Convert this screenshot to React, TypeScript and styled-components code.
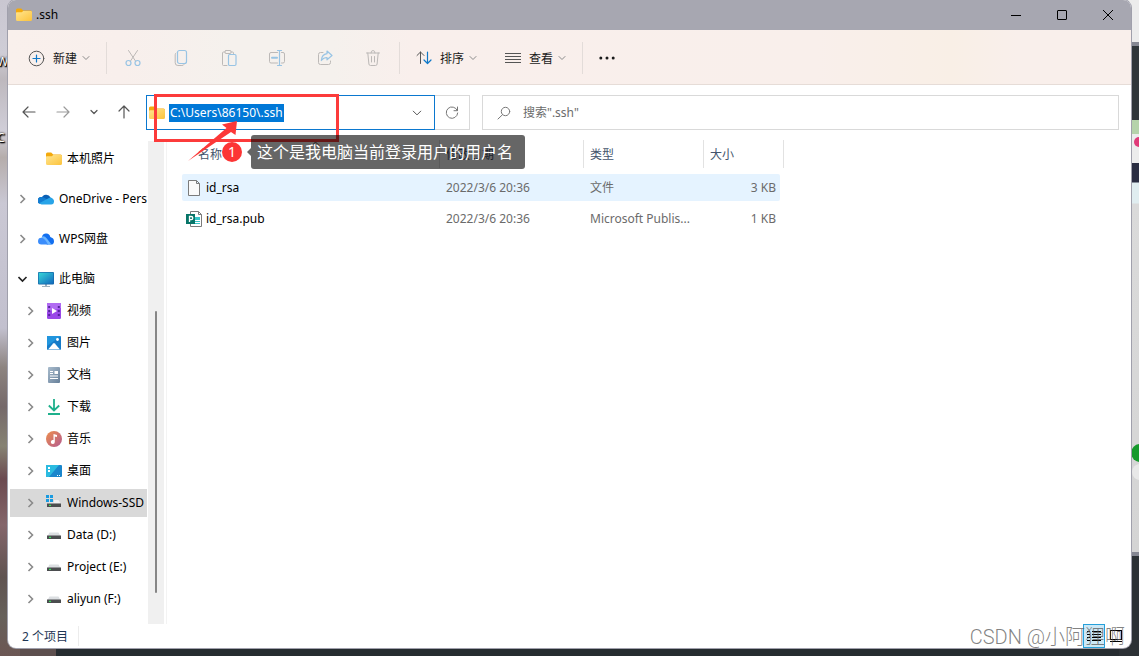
import React from 'react';
import styled, { createGlobalStyle, css } from 'styled-components';

const Global = createGlobalStyle`
  * { box-sizing: border-box; }
  html, body { margin: 0; padding: 0; }
  body {
    font-family: "Noto Sans", "Noto Sans CJK SC", sans-serif;
    font-size: 12px;
    line-height: 18px;
    color: #000;
  }
  button, input {
    font: inherit;
    color: inherit;
    border: 0;
    padding: 0;
    margin: 0;
    background: none;
    outline: 0;
  }
  svg { display: block; flex: none; }
`;

const Desktop = styled.div`
  position: relative;
  display: flex;
  min-height: 100vh;
  padding: 0 8px 8px;
  background: linear-gradient(90deg, #5d4f4e 56px, #262c30 56px);
  overflow: hidden;
`;

const LeftWallpaper = styled.div`
  position: absolute;
  left: 0;
  top: 0;
  bottom: 0;
  width: 20px;
  color: #fff;
  background: linear-gradient(
    180deg,
    #c9c7d1 0%, #cfcdd6 8%, #bdb8bd 12%, #d0ced8 20%, #b5adab 24%, #cac8d4 31%,
    #c2c0ce 50%, #8d8480 56%, #75696a 62%, #868273 68%, #6b4a50 73%, #84656a 80%,
    #5f5350 88%, #66605a 94%, #6c5754 100%
  );
`;

const DesktopLabel = styled.span<{ $top: number }>`
  position: absolute;
  left: -3px;
  top: ${(p) => p.$top}px;
  text-shadow: 0 0 2px #000, 1px 1px 1px #000, 1px 1px 2px #000;
`;

const RightWallpaper = styled.div`
  position: absolute;
  right: 0;
  top: 0;
  width: 20px;
  height: 100%;
  background: linear-gradient(
    180deg,
    #ececec 0, #ececec 42px, #858792 42px, #858792 46px, #30363a 46px, #30363a 120px,
    #b5d3ab 120px, #b5d3ab 134px, #ececec 134px, #ececec 163px, #2a2d42 163px,
    #2a2d42 182px, #e0edf0 183px, #e0edf0 203px, #dadada 204px, #d4d4d4 552px,
    #858792 552px, #858792 556px, #2c3135 556px
  );
`;

const Dot = styled.i<{ $top: number; $size: number; $color: string; $left: number }>`
  position: absolute;
  left: ${(p) => p.$left}px;
  top: ${(p) => p.$top}px;
  width: ${(p) => p.$size}px;
  height: ${(p) => p.$size}px;
  border-radius: 50%;
  background: ${(p) => p.$color};
`;

const Window = styled.main`
  position: relative;
  display: flex;
  flex: 1;
  flex-direction: column;
  min-width: 0;
  border-radius: 8px;
  background: #fff;
  box-shadow: 0 0 0 1px #a0a0ac;
`;

const TitleBar = styled.header`
  display: flex;
  align-items: center;
  height: 30px;
  padding-left: 8px;
  border-radius: 8px 8px 0 0;
  background: #a7a7b1;
`;

const Title = styled.h1`
  flex: 1;
  margin: 0 0 0 4px;
  font-size: 12px;
  font-weight: 400;
`;

const CaptionButton = styled.button`
  display: grid;
  place-items: center;
  width: 46px;
  height: 30px;
`;

const CommandBar = styled.div`
  display: flex;
  align-items: center;
  height: 55px;
  padding: 2px 0 0 20px;
  border-bottom: 1px solid #e6dcd7;
  background: linear-gradient(90deg, #f9f0ec 0, #f8efec 10%, #f5f1ed 20%, #f5f1ed 29%, #f9efec 36%, #f9efeb 72%, #f9efe6 84%, #f9efeb 90%);
`;

const Command = styled.button`
  display: flex;
  align-items: center;
  height: 32px;
  color: #1a1a1a;
`;

const CommandLabel = styled.span`
  margin: 0 5px 0 8px;
  padding-top: 1px;
`;

const CommandDivider = styled.span<{ $before: number; $after: number }>`
  width: 1px;
  height: 32px;
  margin: 0 ${(p) => p.$after}px 0 ${(p) => p.$before}px;
  background: #e3dcd9;
`;

const IconCommand = styled.button`
  display: grid;
  place-items: center;
  width: 48px;
  height: 32px;
`;

const ViewCommand = styled(Command)`
  margin-left: 28px;
`;

const NavBar = styled.div`
  display: flex;
  align-items: center;
  padding: 10px 12px 10px 14px;
`;

const History = styled.div`
  display: flex;
  align-items: center;
  gap: 20px;
  margin-right: 14px;
  padding-bottom: 2px;
`;

const NavButton = styled.button`
  display: grid;
  place-items: center;
`;

const AddressBox = styled.label`
  display: flex;
  align-items: center;
  flex: 0 1 289px;
  height: 35px;
  padding: 0 12px 0 2px;
  border: 1px solid #0b78cf;
  gap: 4px;
`;

const AddressInput = styled.input`
  field-sizing: content;
  height: 18px;
  margin-right: auto;
  padding: 0 1px;
  color: #fff;
  background: #0078d7;
`;

const Refresh = styled.button`
  display: grid;
  place-items: center;
  width: 35px;
  height: 35px;
  margin-right: 12px;
  border: 1px solid #d9d9d9;
  border-left: 0;
`;

const SearchBox = styled.label`
  display: flex;
  align-items: center;
  flex: 1;
  height: 35px;
  padding: 0 14px;
  gap: 12px;
  border: 1px solid #d9d9d9;
`;

const SearchInput = styled.input`
  flex: 1;
  min-width: 0;
  &::placeholder { color: #6b6b6b; opacity: 1; }
`;

const Body = styled.div`
  display: flex;
  flex: 1;
`;

const Sidebar = styled.nav`
  width: 140px;
  padding: 5px 1px 0 2px;
  overflow: hidden;
`;

const ScrollTrack = styled.div`
  width: 16px;
  margin-top: 1px;
  padding: 170px 7px 0;
  background: #f0f0f0;
`;

const ScrollThumb = styled.div`
  width: 2px;
  height: 282px;
  border-radius: 1px;
  background: #868686;
`;

const TreeList = styled.ul`
  display: flex;
  flex-direction: column;
  gap: 12px;
  margin: 0;
  padding: 0;
  list-style: none;
`;

const DriveList = styled(TreeList)`
  gap: 4px;
  padding-top: 4px;
`;

const TreeLink = styled.a<{ $depth: number; $selected?: boolean }>`
  display: flex;
  align-items: center;
  height: 28px;
  padding-left: ${(p) => 8 + p.$depth * 8}px;
  color: #000;
  text-decoration: none;
  white-space: nowrap;
  overflow: hidden;
  ${(p) => p.$selected && css`background: #d9d9d9;`}
`;

const Twisty = styled.span`
  flex: none;
  width: 10px;
  margin-right: 10px;
`;

const TreeLabel = styled.span`
  margin-left: 5px;
`;

const Content = styled.section`
  flex: 1;
  min-width: 0;
  margin-left: 2px;
  padding-left: 15px;
  border-left: 1px solid #f3f3f3;
`;

const FileTable = styled.table`
  width: 602px;
  table-layout: fixed;
  border-collapse: separate;
  border-spacing: 0 4px;
  margin-top: -4px;
`;

const HeadCell = styled.th`
  height: 30px;
  padding: 0 0 2px;
  text-align: left;
  font-weight: 400;
  color: #44546c;
`;

const HeadLabel = styled.span<{ $indent: number }>`
  display: block;
  height: 28px;
  padding-left: ${(p) => p.$indent}px;
  line-height: 30px;
  border-right: 1px solid #e2e2e2;
`;

const FileRow = styled.tr<{ $hover?: boolean }>`
  ${(p) => p.$hover && css`
    td:not(:last-child) { background: #e5f3ff; }
    td:first-child { border-radius: 2px 0 0 2px; }
    td:nth-last-child(2) { border-radius: 0 2px 2px 0; }
  `}
`;

const Cell = styled.td<{ $right?: boolean }>`
  height: 27px;
  padding: 0 4px 0 6px;
  color: #6b6b6b;
  text-align: ${(p) => (p.$right ? 'right' : 'left')};
  white-space: nowrap;
  overflow: hidden;
  text-overflow: ellipsis;
`;

const NameCell = styled(Cell)`
  padding-left: 4px;
  color: #000;
`;

const FileName = styled.span`
  display: flex;
  align-items: center;
  gap: 4px;
`;

const StatusBar = styled.footer`
  display: flex;
  align-items: center;
  height: 24px;
  padding: 0 4px 0 14px;
  color: #1e3654;
`;

const ItemCount = styled.span`
  margin-right: auto;
  padding: 2px 10px 0 0;
  border-right: 1px solid #ececec;
`;

const ViewToggle = styled.button<{ $active?: boolean }>`
  display: grid;
  place-items: center;
  width: 22px;
  height: 24px;
  ${(p) => p.$active && css`
    border: 1px solid #26a0da;
    background: #cce8f6;
  `}
`;

const HighlightBox = styled.div`
  position: absolute;
  left: 146px;
  top: 94px;
  width: 185px;
  height: 48px;
  border: 3px solid #fc3b3b;
`;

const Arrow = styled.svg`
  position: absolute;
  left: 180px;
  top: 120px;
`;

const Step = styled.span`
  position: absolute;
  left: 214px;
  top: 142px;
  width: 20px;
  height: 20px;
  border-radius: 50%;
  background: #fc3535;
  color: #fff;
  font-size: 14px;
  line-height: 20px;
  text-align: center;
`;

const Callout = styled.div`
  position: absolute;
  left: 243px;
  top: 135px;
  height: 34px;
  padding: 0 12px 0 6px;
  border-radius: 3px;
  background: rgba(0, 0, 0, 0.6);
  color: #fff;
  font-size: 16px;
  line-height: 34px;
  white-space: nowrap;
  &::before {
    content: "";
    position: absolute;
    right: 100%;
    top: 13px;
    border: 4px solid transparent;
    border-left: 0;
    border-right-color: rgba(0, 0, 0, 0.6);
  }
`;

const Watermark = styled.span`
  position: absolute;
  right: 6px;
  bottom: -2px;
  color: rgba(90, 90, 90, 0.75);
  font-family: Roboto, "Noto Sans CJK SC", sans-serif;
  font-size: 20px;
  font-weight: 300;
  line-height: 26px;
  pointer-events: none;
`;

const SortMark = styled.svg`
  position: absolute;
  left: 303px;
  top: 141px;
`;

const stroke = { fill: 'none', strokeLinecap: 'round', strokeLinejoin: 'round' } as const;

const FolderIcon = () => (
  <svg width="16" height="16" viewBox="0 0 16 16">
    <defs>
      <linearGradient id="folder" x1="0" y1="0" x2="1" y2="1">
        <stop offset="0" stopColor="#ffe590" />
        <stop offset="1" stopColor="#fcc33c" />
      </linearGradient>
    </defs>
    <path d="M0 3q0-1.500 1.500-1.500h3.700l2 2h7.300q1.500 0 1.500 1.500v5H0z" fill="#f3a90c" />
    <path d="M0 6q0-.8.800-.8h5l1.400-1.200h7.600Q16 4 16 5v7.500q0 1.500-1.500 1.500h-13Q0 14 0 12.500z" fill="url(#folder)" />
  </svg>
);

const Chevron = ({ size = 8, color = '#8a8a8a', width = 1 }) => (
  <svg width={size} height={size} viewBox="0 0 8 8" {...stroke} stroke={color} strokeWidth={width}>
    <path d="M1 2.500l3 3 3-3" />
  </svg>
);

const TreeArrow = ({ open }: { open?: boolean }) => (
  <svg width="10" height="10" viewBox="0 0 10 10" fill="none" stroke={open ? '#222' : '#8a8a8a'} strokeWidth="1.600">
    <path d={open ? 'M.5 3l4 4 4-4' : 'M2.500 1l4 4-4 4'} />
  </svg>
);

const PlusIcon = () => (
  <svg width="17" height="17" viewBox="0 0 17 17" {...stroke}>
    <circle cx="8.500" cy="8.500" r="7.300" stroke="#555" />
    <path d="M5 8.500h7M8.500 5v7" stroke="#0f78c8" strokeWidth="1.200" />
  </svg>
);

const GREY = '#bcb9b7';
const BLUE = '#98c4e4';

const CutIcon = () => (
  <svg width="16" height="18" viewBox="0 0 16 18" {...stroke}>
    <path d="M3.500 1.500l7.200 10.800M12.500 1.500L5.300 12.300" stroke={GREY} />
    <circle cx="3.500" cy="14" r="2.500" stroke={BLUE} strokeWidth="1.200" />
    <circle cx="12.500" cy="14" r="2.500" stroke={BLUE} strokeWidth="1.200" />
  </svg>
);
const CopyIcon = () => (
  <svg width="16" height="18" viewBox="0 0 16 18" {...stroke}>
    <path d="M3 4q-.8.500-.8 1.800v8q0 2.700 2.700 2.700h4q1.600 0 2.200-1" stroke={GREY} />
    <rect x="4.500" y="1.500" width="9" height="13" rx="2" stroke={BLUE} strokeWidth="1.200" />
  </svg>
);
const PasteIcon = () => (
  <svg width="16" height="18" viewBox="0 0 16 18" {...stroke}>
    <path d="M4 3H2.500q-1 0-1 1v11.500q0 1 1 1H6M10 3h1.500q1 0 1 1v.5" stroke={GREY} />
    <rect x="4" y="1.500" width="6" height="3" rx="1" stroke={GREY} />
    <rect x="7.500" y="5.500" width="7.500" height="11" rx="1.200" stroke={BLUE} strokeWidth="1.200" />
  </svg>
);
const RenameIcon = () => (
  <svg width="18" height="18" viewBox="0 0 18 18" {...stroke}>
    <path d="M9.500 3.500H3q-1.500 0-1.500 1.500v7.500Q1.500 14 3 14h6.500M13.500 3.500H15q1.500 0 1.500 1.500v7.500Q16.500 14 15 14h-1.500" stroke={GREY} />
    <path d="M9.500 1.500h4M11.500 1.500v15M9.500 16.500h4" stroke={BLUE} strokeWidth="1.200" />
    <path d="M4 8.700h5" stroke={BLUE} strokeWidth="2" />
  </svg>
);
const ShareIcon = () => (
  <svg width="16" height="18" viewBox="0 0 16 18" {...stroke}>
    <path d="M6 3.500H3.500Q1.500 3.500 1.500 5.500v8q0 2 2 2h8q2 0 2-2V12" stroke={GREY} />
    <path d="M10 2l5 4.500-5 4.300V8.500Q6.500 8.500 4.300 11.500 4.700 5.500 10 4.700z" stroke={BLUE} strokeWidth="1.200" />
  </svg>
);
const DeleteIcon = () => (
  <svg width="16" height="18" viewBox="0 0 16 18" {...stroke} stroke={GREY}>
    <path d="M1.500 4h13M6 4q0-2.500 2-2.500T10 4M2.800 4l1.100 11q.1 1.500 1.600 1.500h5q1.500 0 1.600-1.500L13.200 4M6.500 7.500v5.500M9.500 7.500v5.500" />
  </svg>
);
const SortIcon = () => (
  <svg width="16" height="14" viewBox="0 0 16 14" {...stroke}>
    <path d="M4.500 12.500V1M1 4.500L4.500 1 8 4.500" stroke="#555" />
    <path d="M11.500 1v11.500M8 9l3.500 3.500L15 9" stroke="#0f78c8" strokeWidth="1.200" />
  </svg>
);
const LinesIcon = () => (
  <svg width="16" height="12" viewBox="0 0 16 12" stroke="#555" shapeRendering="crispEdges">
    <path d="M0 1.500h16M0 4.500h16M0 7.500h16M0 10.500h16" />
  </svg>
);
const MoreIcon = () => (
  <svg width="16" height="4" viewBox="0 0 16 4" fill="#1a1a1a">
    <circle cx="1.800" cy="2" r="1.500" />
    <circle cx="8" cy="2" r="1.500" />
    <circle cx="14.200" cy="2" r="1.500" />
  </svg>
);

const ArrowIcon = ({ d, color = '#555' }: { d: string; color?: string }) => (
  <svg width="14" height="14" viewBox="0 0 14 14" {...stroke} stroke={color} strokeWidth="1.200">
    <path d={d} />
  </svg>
);

const CloudIcon = () => (
  <svg width="16" height="16" viewBox="0 0 16 16">
    <path d="M3.500 7A5 5 0 0 1 12.600 6.400L9 11 1 12.500A3.600 3.600 0 0 1 3.500 6z" fill="#0b60b5" />
    <path d="M3.700 6a3.700 3.700 0 0 1 2.200.6L10 9l-8.500 3.700A3.600 3.600 0 0 1 3.700 6z" fill="#137dd2" />
    <path d="M1.200 12.300L10.500 7.200A3.600 3.600 0 0 1 16 10.500 2.900 2.900 0 0 1 13 13.400H3.600A3.500 3.500 0 0 1 1.200 12.300z" fill="#28a4e8" />
  </svg>
);
const WpsIcon = () => (
  <svg width="16" height="16" viewBox="0 0 16 16">
    <path d="M4 5.500A4.300 4.300 0 0 1 12.300 6Q16 7 16 10.400 16 13.500 13 13.500H9L4 8z" fill="#126ff0" />
    <path d="M4 5.500q2.500-1 5 2.200l4.500 5.800H9L3.500 7z" fill="#6cb6ff" />
    <path d="M0 10.200A3.500 3.500 0 0 1 3.500 6.800Q6 7 8 10l2 3.500H3.500A3.400 3.400 0 0 1 0 10.200z" fill="#3b8dfb" />
  </svg>
);
const PcIcon = () => (
  <svg width="16" height="16" viewBox="0 0 16 16">
    <defs>
      <linearGradient id="screen" x1="0" y1="0" x2="1" y2="1">
        <stop offset="0" stopColor="#36d6d8" />
        <stop offset="1" stopColor="#1268bd" />
      </linearGradient>
    </defs>
    <path d="M7 13h2v2H7zM4 15h8v1H4z" fill="#9fb1bf" />
    <rect y="1" width="16" height="12.500" rx="1" fill="#1567a8" />
    <rect x=".7" y="1.700" width="14.600" height="11" fill="url(#screen)" />
  </svg>
);
const VideoIcon = () => (
  <svg width="16" height="16" viewBox="0 0 16 16">
    <rect x="1" width="14" height="16" rx="1.200" fill="#9a48e8" />
    <path d="M1 0h14v5L1 9z" fill="#b16bf2" />
    <path d="M2.200 3h2v2h-2zM2.200 7h2v2h-2zM2.200 11h2v2h-2zM11.800 3h2v2h-2zM11.800 7h2v2h-2zM11.800 11h2v2h-2z" fill="#54239c" />
    <path d="M6 5l5 3-5 3z" fill="#fff" />
  </svg>
);
const ImageIcon = () => (
  <svg width="16" height="16" viewBox="0 0 16 16">
    <rect x="1" y="1" width="14" height="14" rx="1.200" fill="#167cc9" />
    <path d="M1 1h14L1 11z" fill="#2195dd" />
    <path d="M2 14.500L7.200 8.500q.8-.8 1.600 0l5.200 6z" fill="#fff" />
    <circle cx="11.500" cy="4.500" r="1.400" fill="#fff" />
  </svg>
);
const DocIcon = () => (
  <svg width="16" height="16" viewBox="0 0 16 16">
    <defs>
      <linearGradient id="doc" x1="0" y1="0" x2="1" y2="1">
        <stop offset="0" stopColor="#a9bccd" />
        <stop offset="1" stopColor="#667f99" />
      </linearGradient>
    </defs>
    <rect x="2" width="12" height="16" rx="1" fill="url(#doc)" />
    <path d="M4 4h3v1H4zM4 6h3v1H4zM8.500 4H12v3H8.500zM4 8.500h8v1H4zM4 11h8v1H4z" fill="#fff" />
  </svg>
);
const DownloadIcon = () => (
  <svg width="16" height="16" viewBox="0 0 16 16" fill="none" stroke="#1eb08c" strokeWidth="1.800">
    <path d="M8 0v11M2.800 6.500L8 11.500l5.200-5M2 15h12" />
  </svg>
);
const MusicIcon = () => (
  <svg width="16" height="16" viewBox="0 0 16 16">
    <defs>
      <linearGradient id="music" x1="0" y1="0" x2="1" y2="1">
        <stop offset="0" stopColor="#ee8f4c" />
        <stop offset="1" stopColor="#b35a91" />
      </linearGradient>
    </defs>
    <circle cx="8" cy="8" r="8" fill="url(#music)" />
    <path d="M7.500 3l3.500 1v2L8.800 5.500V11a2 2 0 1 1-1.300-1.900z" fill="#fff" />
  </svg>
);
const DesktopIcon = () => (
  <svg width="16" height="16" viewBox="0 0 16 16">
    <rect y="2" width="16" height="12" rx="1" fill="#1a86cc" />
    <path d="M0 3q0-1 1-1h12L3 14H1q-1 0-1-1z" fill="#2bbbe0" />
    <path d="M2 4h2v2H2zM2 7h2v2H2zM11 12h1v1h-1zM13 12h1v1h-1z" fill="#fff" />
  </svg>
);
const DriveIcon = ({ system }: { system?: boolean }) => (
  <svg width="16" height="16" viewBox="0 0 16 16">
    {system && <path d="M0 0h3v3H0zM4 0h3v3H4zM0 4h3v3H0zM4 4h3v3H4z" fill="#1a9be0" />}
    <path d={system ? 'M8 5h4.500l2 3.500h-12.500l1-1h5z' : 'M3.500 5.500h9l2 3.500h-13z'} fill={system ? '#f0f1f3' : '#dcdfe2'} />
    <rect x="1" y="8.500" width="14" height="3.500" fill="#4b4d4f" />
    <rect x="3" y="9.800" width="2" height="1.200" fill="#37e05a" />
  </svg>
);
const PageIcon = () => (
  <svg width="16" height="16" viewBox="0 0 16 16" fill="#fafafa" stroke="#7b7b7b">
    <path d="M2.500.5h8l3 3v12h-11zM10.500.5v3h3" />
  </svg>
);
const PublisherIcon = () => (
  <svg width="16" height="16" viewBox="0 0 16 16">
    <path d="M4.500.5h8l3 3v12h-11zM12.500.5v3h3" fill="#fff" stroke="#7b7b7b" />
    <path d="M9 6h5v3H9z" fill="#38c6c9" />
    <path d="M9 10h5v1H9zM9 12h5v1H9z" fill="#38c6c9" />
    <rect y="3" width="9" height="10" fill="#077568" />
    <path d="M3.500 11V5.500h1.700a1.500 1.500 0 0 1 0 3.200H3.500" fill="none" stroke="#fff" strokeWidth="1.300" />
  </svg>
);

const places = [
  { name: '视频', icon: <VideoIcon /> },
  { name: '图片', icon: <ImageIcon /> },
  { name: '文档', icon: <DocIcon /> },
  { name: '下载', icon: <DownloadIcon /> },
  { name: '音乐', icon: <MusicIcon /> },
  { name: '桌面', icon: <DesktopIcon /> },
  { name: 'Windows-SSD', icon: <DriveIcon system />, selected: true },
  { name: 'Data (D:)', icon: <DriveIcon /> },
  { name: 'Project (E:)', icon: <DriveIcon /> },
  { name: 'aliyun (F:)', icon: <DriveIcon /> },
];

const files = [
  { name: 'id_rsa', date: '2022/3/6 20:36', type: '文件', size: '3 KB', icon: <PageIcon />, hover: true },
  { name: 'id_rsa.pub', date: '2022/3/6 20:36', type: 'Microsoft Publis...', size: '1 KB', icon: <PublisherIcon /> },
];

type NodeProps = {
  name: string;
  icon: React.ReactNode;
  depth: number;
  leaf?: boolean;
  open?: boolean;
  selected?: boolean;
};

const TreeNode = ({ name, icon, depth, leaf, open, selected }: NodeProps) => (
  <TreeLink href="#" $depth={depth} $selected={selected}>
    <Twisty>{!leaf && <TreeArrow open={open} />}</Twisty>
    {icon}
    <TreeLabel>{name}</TreeLabel>
  </TreeLink>
);

export default function App() {
  return (
    <>
      <Global />
      <Desktop>
        <LeftWallpaper>
          <DesktopLabel $top={53}>W</DesktopLabel>
          <DesktopLabel $top={129}>C</DesktopLabel>
        </LeftWallpaper>
        <RightWallpaper>
          <Dot $left={15} $top={137} $size={10} $color="#e03a78" />
          <Dot $left={12} $top={444} $size={18} $color="#169a2c" />
          <Dot $left={13} $top={464} $size={16} $color="#e8e8e8" />
        </RightWallpaper>
        <Window>
          <TitleBar>
            <FolderIcon />
            <Title>.ssh</Title>
            <CaptionButton aria-label="最小化">
              <svg width="10" height="10" viewBox="0 0 10 10" stroke="#000"><path d="M0 5.500h10" /></svg>
            </CaptionButton>
            <CaptionButton aria-label="最大化">
              <svg width="10" height="10" viewBox="0 0 10 10" stroke="#000" fill="none"><rect x=".5" y=".5" width="9" height="9" rx=".5" /></svg>
            </CaptionButton>
            <CaptionButton aria-label="关闭">
              <svg width="10" height="10" viewBox="0 0 10 10" stroke="#000"><path d="M0 0l10 10M10 0L0 10" /></svg>
            </CaptionButton>
          </TitleBar>

          <CommandBar>
            <Command>
              <PlusIcon />
              <CommandLabel>新建</CommandLabel>
              <Chevron />
            </Command>
            <CommandDivider $before={16} $after={2} />
            <IconCommand aria-label="剪切"><CutIcon /></IconCommand>
            <IconCommand aria-label="复制"><CopyIcon /></IconCommand>
            <IconCommand aria-label="粘贴"><PasteIcon /></IconCommand>
            <IconCommand aria-label="重命名"><RenameIcon /></IconCommand>
            <IconCommand aria-label="共享"><ShareIcon /></IconCommand>
            <IconCommand aria-label="删除"><DeleteIcon /></IconCommand>
            <CommandDivider $before={2} $after={16} />
            <Command>
              <SortIcon />
              <CommandLabel>排序</CommandLabel>
              <Chevron />
            </Command>
            <ViewCommand>
              <LinesIcon />
              <CommandLabel>查看</CommandLabel>
              <Chevron />
            </ViewCommand>
            <CommandDivider $before={16} $after={16} />
            <Command aria-label="更多"><MoreIcon /></Command>
          </CommandBar>

          <NavBar>
            <History>
              <NavButton aria-label="后退"><ArrowIcon d="M13 7H1.500M6 2L1 7l5 5" /></NavButton>
              <NavButton aria-label="前进"><ArrowIcon d="M1 7h11.500M8 2l5 5-5 5" color="#9a9a9a" /></NavButton>
              <NavButton aria-label="最近的位置"><Chevron color="#555" width={1.2} /></NavButton>
              <NavButton aria-label="上移"><ArrowIcon d="M6 13V1.500M1 6l5-5 5 5" /></NavButton>
            </History>
            <AddressBox>
              <FolderIcon />
              <AddressInput aria-label="地址" defaultValue={'C:\\Users\\86150\\.ssh'} />
              <Chevron size={10} color="#555" width={0.8} />
            </AddressBox>
            <Refresh aria-label="刷新">
              <svg width="14" height="14" viewBox="0 0 14 14" {...stroke} stroke="#777">
                <path d="M12.300 4.500A5.700 5.700 0 1 0 12.700 7M12.500 1v3.700H9" />
              </svg>
            </Refresh>
            <SearchBox>
              <svg width="14" height="14" viewBox="0 0 14 14" {...stroke} stroke="#777">
                <circle cx="8.500" cy="5.500" r="4.200" />
                <path d="M5.500 8.700L1 13" />
              </svg>
              <SearchInput aria-label="搜索" placeholder={'搜索".ssh"'} />
            </SearchBox>
          </NavBar>

          <Body>
            <Sidebar>
              <TreeList>
                <li><TreeNode name="本机照片" icon={<FolderIcon />} depth={1} leaf /></li>
                <li><TreeNode name="OneDrive - Personal" icon={<CloudIcon />} depth={0} /></li>
                <li><TreeNode name="WPS网盘" icon={<WpsIcon />} depth={0} /></li>
                <li>
                  <TreeNode name="此电脑" icon={<PcIcon />} depth={0} open />
                  <DriveList>
                    {places.map((p) => (
                      <li key={p.name}><TreeNode {...p} depth={1} /></li>
                    ))}
                  </DriveList>
                </li>
              </TreeList>
            </Sidebar>
            <ScrollTrack><ScrollThumb /></ScrollTrack>
            <Content>
              <FileTable>
                <colgroup>
                  <col width="258" />
                  <col width="144" />
                  <col width="120" />
                  <col width="76" />
                  <col width="4" />
                </colgroup>
                <thead>
                  <tr>
                    <HeadCell><HeadLabel $indent={16}>名称</HeadLabel></HeadCell>
                    <HeadCell><HeadLabel $indent={6}>修改日期</HeadLabel></HeadCell>
                    <HeadCell><HeadLabel $indent={6}>类型</HeadLabel></HeadCell>
                    <HeadCell colSpan={2}><HeadLabel $indent={6}>大小</HeadLabel></HeadCell>
                  </tr>
                </thead>
                <tbody>
                  {files.map((f) => (
                    <FileRow key={f.name} $hover={f.hover}>
                      <NameCell><FileName>{f.icon}{f.name}</FileName></NameCell>
                      <Cell>{f.date}</Cell>
                      <Cell>{f.type}</Cell>
                      <Cell $right>{f.size}</Cell>
                      <td />
                    </FileRow>
                  ))}
                </tbody>
              </FileTable>
            </Content>
          </Body>

          <StatusBar>
            <ItemCount>2 个项目</ItemCount>
            <ViewToggle $active aria-label="详细信息">
              <svg width="14" height="12" viewBox="0 0 14 12" stroke="#000" shapeRendering="crispEdges">
                <path d="M0 1.500h3M5 1.500h9M0 4.500h3M5 4.500h9M0 7.500h3M5 7.500h9M0 10.500h3M5 10.500h9" />
              </svg>
            </ViewToggle>
            <ViewToggle aria-label="大图标">
              <svg width="12" height="12" viewBox="0 0 12 12" stroke="#000" fill="none" shapeRendering="crispEdges">
                <path d="M.5.5h11v9H.5zM0 11.500h12" />
              </svg>
            </ViewToggle>
          </StatusBar>

          <SortMark width="9" height="5" viewBox="0 0 9 5" fill="none" stroke="#555">
            <path d="M1 4.500l3.500-3.500L8 4.500" />
          </SortMark>
          <HighlightBox />
          <Arrow width="60" height="44" viewBox="0 0 60 44" fill="#fc3838">
            <path d="M49 1L34 4.500l4.500 3.500L0 41 43 12l4.500 3z" />
          </Arrow>
          <Step>1</Step>
          <Callout>这个是我电脑当前登录用户的用户名</Callout>
          <Watermark>CSDN @小阿狸啊</Watermark>
        </Window>
      </Desktop>
    </>
  );
}
